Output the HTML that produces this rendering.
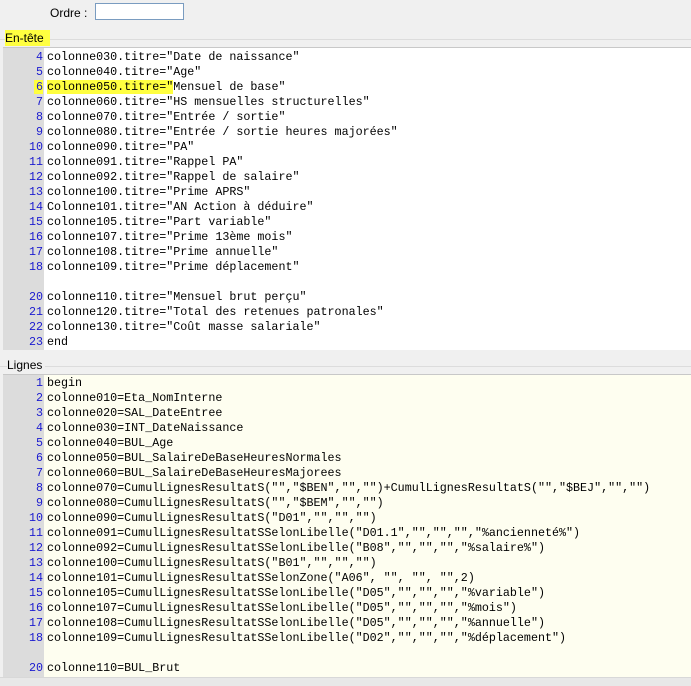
<!DOCTYPE html>
<html><head><meta charset="utf-8"><style>
body{margin:0;width:691px;height:685px;background:#f0f0f0;position:relative;overflow:hidden;font-family:"Liberation Sans",sans-serif;font-size:12px}
.lbl{position:absolute;color:#000}
.ed{position:absolute;left:3px;right:0;border-top:1px solid #c8c8c8;overflow:hidden}
.g{position:absolute;left:0;top:0;bottom:0;width:41px;background:#dcdcdc}
.ln{position:absolute;left:0;width:40px;text-align:right;color:#1a1ad0;font-family:"Liberation Mono",monospace;font-size:11.7px;line-height:15px}
.tx{position:absolute;left:44px;font-family:"Liberation Mono",monospace;font-size:11.7px;line-height:15px;white-space:pre;color:#000}
.hl{background:#ffff40}
</style></head><body>
<div class="lbl" style="left:50px;top:6px">Ordre :</div>
<div style="position:absolute;left:95px;top:3px;width:89px;height:17px;background:#fff;border:1px solid #7a9cc0;box-sizing:border-box"></div>
<div style="position:absolute;left:0;right:0;top:39px;border-top:1px solid #dcdcdc"></div>
<div class="lbl hl" style="left:5px;top:30px;width:45px;height:16px;line-height:16px;">En-tête</div>
<div class="ed" style="top:47px;height:302px;background:#fff">
<div class="g"></div>
<div class="ln" style="top:2px">4<br>5<br><span class="hl" style="padding-left:2px">6</span><br>7<br>8<br>9<br>10<br>11<br>12<br>13<br>14<br>15<br>16<br>17<br>18<br>&nbsp;<br>20<br>21<br>22<br>23</div>
<div class="tx" style="top:2px">colonne030.titre="Date de naissance"
colonne040.titre="Age"
<span class="hl">colonne050.titre="</span>Mensuel de base"
colonne060.titre="HS mensuelles structurelles"
colonne070.titre="Entrée / sortie"
colonne080.titre="Entrée / sortie heures majorées"
colonne090.titre="PA"
colonne091.titre="Rappel PA"
colonne092.titre="Rappel de salaire"
colonne100.titre="Prime APRS"
Colonne101.titre="AN Action à déduire"
colonne105.titre="Part variable"
colonne107.titre="Prime 13ème mois"
colonne108.titre="Prime annuelle"
colonne109.titre="Prime déplacement"

colonne110.titre="Mensuel brut perçu"
colonne120.titre="Total des retenues patronales"
colonne130.titre="Coût masse salariale"
end</div>
</div>
<div style="position:absolute;left:0;right:0;top:366px;border-top:1px solid #dcdcdc"></div>
<div class="lbl" style="left:7px;top:358px;background:#f0f0f0;padding-right:3px">Lignes</div>
<div class="ed" style="top:374px;height:303px;background:#fefef0">
<div class="g"></div>
<div class="ln" style="top:1px">1<br>2<br>3<br>4<br>5<br>6<br>7<br>8<br>9<br>10<br>11<br>12<br>13<br>14<br>15<br>16<br>17<br>18<br>&nbsp;<br>20</div>
<div class="tx" style="top:1px">begin
colonne010=Eta_NomInterne
colonne020=SAL_DateEntree
colonne030=INT_DateNaissance
colonne040=BUL_Age
colonne050=BUL_SalaireDeBaseHeuresNormales
colonne060=BUL_SalaireDeBaseHeuresMajorees
colonne070=CumulLignesResultatS("","$BEN","","")+CumulLignesResultatS("","$BEJ","","")
colonne080=CumulLignesResultatS("","$BEM","","")
colonne090=CumulLignesResultatS("D01","","","")
colonne091=CumulLignesResultatSSelonLibelle("D01.1","","","","%ancienneté%")
colonne092=CumulLignesResultatSSelonLibelle("B08","","","","%salaire%")
colonne100=CumulLignesResultatS("B01","","","")
colonne101=CumulLignesResultatSSelonZone("A06", "", "", "",2)
colonne105=CumulLignesResultatSSelonLibelle("D05","","","","%variable")
colonne107=CumulLignesResultatSSelonLibelle("D05","","","","%mois")
colonne108=CumulLignesResultatSSelonLibelle("D05","","","","%annuelle")
colonne109=CumulLignesResultatSSelonLibelle("D02","","","","%déplacement")

colonne110=BUL_Brut</div>
</div>
<div style="position:absolute;left:0;right:0;top:677px;height:8px;background:#e8e8e8;border-top:1px solid #d8d8d8"></div>
</body></html>
